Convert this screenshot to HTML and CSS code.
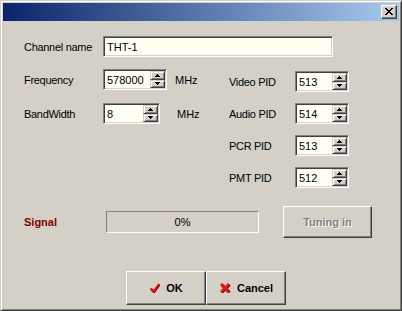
FILE: index.html
```html
<!DOCTYPE html>
<html lang="en">
<head>
    <meta charset="UTF-8">
    <title>Channel settings</title>
    <link rel="stylesheet" href="styles.css">
</head>
<body>
    <div class="window">
        <div class="titlebar">
            <div class="close">
                <svg width="8" height="7" viewBox="0 0 8 7"><path d="M0 0h2v1H0zM6 0h2v1H6zM1 1h2v1H1zM5 1h2v1H5zM2 2h4v1H2zM3 3h2v1H3zM2 4h4v1H2zM1 5h2v1H1zM5 5h2v1H5zM0 6h2v1H0zM6 6h2v1H6z"/></svg>
            </div>
        </div>

        <div class="content">
            <div class="name-row">
                <span class="lbl">Channel name</span>
                <div class="edit name">THT-1</div>
            </div>

            <div class="middle">
                <div class="tuning">
                    <span class="lbl">Frequency</span>
                    <div class="edit spin freq">
                        <span class="val">578000</span>
                        <span class="updown">
                            <span class="arrow"><svg width="5" height="3" viewBox="0 0 5 3"><path d="M2 0h1v1H2zM1 1h3v1H1zM0 2h5v1H0z"/></svg></span>
                            <span class="arrow"><svg width="5" height="3" viewBox="0 0 5 3"><path d="M0 0h5v1H0zM1 1h3v1H1zM2 2h1v1H2z"/></svg></span>
                        </span>
                    </div>
                    <span class="unit">MHz</span>

                    <span class="lbl">BandWidth</span>
                    <div class="edit spin bw">
                        <span class="val">8</span>
                        <span class="updown">
                            <span class="arrow"><svg width="5" height="3" viewBox="0 0 5 3"><path d="M2 0h1v1H2zM1 1h3v1H1zM0 2h5v1H0z"/></svg></span>
                            <span class="arrow"><svg width="5" height="3" viewBox="0 0 5 3"><path d="M0 0h5v1H0zM1 1h3v1H1zM2 2h1v1H2z"/></svg></span>
                        </span>
                    </div>
                    <span class="unit unit-bw">MHz</span>
                </div>

                <div class="pids">
                    <span class="lbl">Video PID</span>
                    <div class="edit spin pid">
                        <span class="val">513</span>
                        <span class="updown">
                            <span class="arrow"><svg width="5" height="3" viewBox="0 0 5 3"><path d="M2 0h1v1H2zM1 1h3v1H1zM0 2h5v1H0z"/></svg></span>
                            <span class="arrow"><svg width="5" height="3" viewBox="0 0 5 3"><path d="M0 0h5v1H0zM1 1h3v1H1zM2 2h1v1H2z"/></svg></span>
                        </span>
                    </div>

                    <span class="lbl">Audio PID</span>
                    <div class="edit spin pid">
                        <span class="val">514</span>
                        <span class="updown">
                            <span class="arrow"><svg width="5" height="3" viewBox="0 0 5 3"><path d="M2 0h1v1H2zM1 1h3v1H1zM0 2h5v1H0z"/></svg></span>
                            <span class="arrow"><svg width="5" height="3" viewBox="0 0 5 3"><path d="M0 0h5v1H0zM1 1h3v1H1zM2 2h1v1H2z"/></svg></span>
                        </span>
                    </div>

                    <span class="lbl">PCR PID</span>
                    <div class="edit spin pid">
                        <span class="val">513</span>
                        <span class="updown">
                            <span class="arrow"><svg width="5" height="3" viewBox="0 0 5 3"><path d="M2 0h1v1H2zM1 1h3v1H1zM0 2h5v1H0z"/></svg></span>
                            <span class="arrow"><svg width="5" height="3" viewBox="0 0 5 3"><path d="M0 0h5v1H0zM1 1h3v1H1zM2 2h1v1H2z"/></svg></span>
                        </span>
                    </div>

                    <span class="lbl">PMT PID</span>
                    <div class="edit spin pid">
                        <span class="val">512</span>
                        <span class="updown">
                            <span class="arrow"><svg width="5" height="3" viewBox="0 0 5 3"><path d="M2 0h1v1H2zM1 1h3v1H1zM0 2h5v1H0z"/></svg></span>
                            <span class="arrow"><svg width="5" height="3" viewBox="0 0 5 3"><path d="M0 0h5v1H0zM1 1h3v1H1zM2 2h1v1H2z"/></svg></span>
                        </span>
                    </div>
                </div>
            </div>

            <div class="signal-row">
                <span class="signal">Signal</span>
                <div class="progress">0%</div>
                <div class="btn tune disabled">Tuning in</div>
            </div>

            <div class="actions">
                <div class="btn action">
                    <svg width="11" height="10" viewBox="0 0 11 10"><path d="M1.5 5.5l3 3 5.5-7.5" fill="none" stroke="#7a0000" stroke-width="2.4" transform="translate(0.5 0.5)"/><path d="M1.5 5.5l3 3 5.5-7.5" fill="none" stroke="#e01010" stroke-width="2"/></svg>
                    <span>OK</span>
                </div>
                <div class="btn action">
                    <svg width="12" height="10" viewBox="0 0 12 10"><path d="M2 1l8 8M10 1l-8 8" fill="none" stroke="#800000" stroke-width="3" transform="translate(0.6 0.6)"/><path d="M2 1l8 8M10 1l-8 8" fill="none" stroke="#e01818" stroke-width="2.6"/></svg>
                    <span>Cancel</span>
                </div>
            </div>
        </div>
    </div>
</body>
</html>
```

FILE: styles.css
```css
* {
    box-sizing: border-box;
}
body {
    margin: 0;
    font-family: "Liberation Sans", Arial, sans-serif;
    font-size: 11px;
    color: #000;
}
.window {
    width: 402px;
    height: 311px;
    background-color: #d4d0c8;
    border: 1px solid;
    border-color: #d4d0c8 #404040 #404040 #d4d0c8;
    box-shadow: inset 1px 1px #fff, inset -1px -1px #808080;
    padding: 2px;
    display: flex;
    flex-direction: column;
}
.titlebar {
    height: 18px;
    background: linear-gradient(to right, #0a246a, #a6caf0);
    display: flex;
    align-items: center;
    justify-content: flex-end;
    padding-right: 2px;
}
.close,
.arrow,
.btn {
    background-color: #d4d0c8;
    border: 1px solid;
    border-color: #fff #404040 #404040 #fff;
    box-shadow: inset -1px -1px #808080;
    display: flex;
    align-items: center;
    justify-content: center;
}
.close {
    width: 16px;
    height: 14px;
    padding: 0 1px 1px 0;
}
.content {
    flex: 1;
    padding: 15px 0 0 21px;
}
.lbl {
    letter-spacing: -0.3px;
}
.edit {
    height: 21px;
    background-color: #fffff2;
    border: 1px solid;
    border-color: #808080 #fff #fff #808080;
    box-shadow: inset 1px 1px #404040, inset -1px -1px #d4d0c8;
    padding: 1px 1px 1px 3px;
    display: flex;
    align-items: center;
}
.name-row {
    display: flex;
    align-items: center;
}
.name-row .lbl {
    width: 79px;
}
.name {
    width: 230px;
}
.middle {
    display: flex;
    margin-top: 12px;
}
.tuning {
    width: 205px;
    display: grid;
    grid-template-columns: 79px 72px auto;
    row-gap: 13px;
    align-items: center;
    align-content: start;
}
.freq {
    width: 64px;
}
.bw {
    width: 57px;
}
.unit-bw {
    padding-left: 2px;
}
.pids {
    display: grid;
    grid-template-columns: 66px 54px;
    row-gap: 11px;
    align-items: center;
    align-content: start;
    padding-top: 2px;
}
.spin .val {
    flex: 1;
}
.updown {
    width: 15px;
    align-self: stretch;
    display: flex;
    flex-direction: column;
}
.arrow {
    flex: 1;
    border-color: #d4d0c8 #404040 #404040 #d4d0c8;
    box-shadow: inset 1px 1px #fff, inset -1px -1px #808080;
}
.signal-row {
    display: flex;
    align-items: center;
    margin-top: 18px;
    height: 32px;
}
.signal {
    width: 82px;
    font-weight: bold;
    color: #800000;
}
.progress {
    width: 153px;
    height: 22px;
    margin-right: 24px;
    border: 1px solid;
    border-color: #808080 #fff #fff #808080;
    display: flex;
    align-items: center;
    justify-content: center;
}
.tune {
    width: 89px;
    height: 32px;
    font-weight: bold;
}
.disabled {
    color: #808080;
    text-shadow: 1px 1px #fff;
}
.actions {
    display: flex;
    margin-top: 33px;
    padding-left: 102px;
}
.action {
    width: 80px;
    height: 34px;
    gap: 6px;
    font-weight: bold;
}
```
